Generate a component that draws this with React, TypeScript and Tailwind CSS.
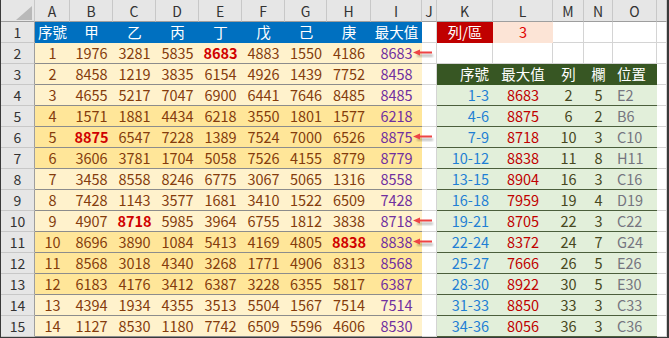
import React from "react";

const FONT = { fontFamily: '"Noto Sans CJK TC", "Noto Sans", sans-serif' };

// column widths in px: row header, A..P
const W = [34, 35, 43, 43, 43, 43, 43, 42, 44, 51, 15, 56, 60, 31, 29, 44, 10];
const LETTERS = ["", "A", "B", "C", "D", "E", "F", "G", "H", "I", "J", "K", "L", "M", "N", "O", ""];
const WCLS = [
  "w-[34px]", "w-[35px]", "w-[43px]", "w-[43px]", "w-[43px]", "w-[43px]", "w-[43px]", "w-[42px]",
  "w-[44px]", "w-[51px]", "w-[15px]", "w-[56px]", "w-[60px]", "w-[31px]", "w-[29px]", "w-[44px]", "w-[10px]",
];

const data: number[][] = [
  [1976, 3281, 5835, 8683, 4883, 1550, 4186, 8683],
  [8458, 1219, 3835, 6154, 4926, 1439, 7752, 8458],
  [4655, 5217, 7047, 6900, 6441, 7646, 8485, 8485],
  [1571, 1881, 4434, 6218, 3550, 1801, 1577, 6218],
  [8875, 6547, 7228, 1389, 7524, 7000, 6526, 8875],
  [3606, 3781, 1704, 5058, 7526, 4155, 8779, 8779],
  [3458, 8558, 8246, 6775, 3067, 5065, 1316, 8558],
  [7428, 1143, 3577, 1681, 3410, 1522, 6509, 7428],
  [4907, 8718, 5985, 3964, 6755, 1812, 3838, 8718],
  [8696, 3890, 1084, 5413, 4169, 4805, 8838, 8838],
  [8568, 3018, 4340, 3268, 1771, 4906, 8313, 8568],
  [6183, 4176, 3412, 6387, 3228, 6355, 5817, 6387],
  [4394, 1934, 4355, 3513, 5504, 1567, 7514, 7514],
  [1127, 8530, 1180, 7742, 6509, 5596, 4606, 8530],
];

// [row index, column index] of bold red maxima
const bold: Record<number, number> = { 0: 3, 4: 0, 8: 1, 9: 6 };
const arrows = new Set([0, 4, 8, 9]);

const summary: [string, number, number, number, string][] = [
  ["1-3", 8683, 2, 5, "E2"],
  ["4-6", 8875, 6, 2, "B6"],
  ["7-9", 8718, 10, 3, "C10"],
  ["10-12", 8838, 11, 8, "H11"],
  ["13-15", 8904, 16, 3, "C16"],
  ["16-18", 7959, 19, 4, "D19"],
  ["19-21", 8705, 22, 3, "C22"],
  ["22-24", 8372, 24, 7, "G24"],
  ["25-27", 7666, 26, 5, "E26"],
  ["28-30", 8922, 30, 5, "E30"],
  ["31-33", 8850, 33, 3, "C33"],
  ["34-36", 8056, 36, 3, "C36"],
];

function Arrow({ id }: { id: string }) {
  return (
    <svg
      className="absolute left-[41px] top-[5px] z-10"
      width="24"
      height="12"
      viewBox="0 0 24 12"
    >
      <defs>
        <filter id={id} x="-20%" y="-50%" width="140%" height="200%">
          <feGaussianBlur stdDeviation="0.8" />
        </filter>
      </defs>
      <rect x="5" y="6.5" width="16" height="2.2" fill="#000" opacity="0.3" filter={`url(#${id})`} />
      <path d="M1 4.5 L8 1.5 L8 7.5 Z" fill="#ee4444" />
      <rect x="7" y="3.5" width="13" height="2" fill="#ee4444" />
    </svg>
  );
}

function RowHead({ n }: { n: number }) {
  return (
    <div className="flex h-[21px] w-[34px] shrink-0 items-center justify-center border-r border-b border-r-[#9e9e9e] border-b-[#c8c8c8] bg-[#e6e6e6] text-[14px] text-[#333]">
      {n}
    </div>
  );
}

function Grid({ w, children, className = "" }: { w: string; children?: React.ReactNode; className?: string }) {
  return (
    <div className={`${w} flex h-[21px] shrink-0 items-center border-r border-b border-[#d4d4d4] bg-white ${className}`}>
      {children}
    </div>
  );
}

export default function App() {
  return (
    <div
      className="h-[338px] w-[669px] overflow-hidden border-l border-b border-r-2 border-[#3a3a3a] bg-white text-[14.5px] leading-none"
      style={FONT}
    >
      {/* column letters */}
      <div className="flex h-[22px]">
        {LETTERS.map((l, i) => (
          <div
            key={i}
            className={`${WCLS[i]} relative flex shrink-0 items-center justify-center border-r border-b border-r-[#c8c8c8] border-b-[#9e9e9e] bg-[#e6e6e6] pt-[1px] text-[14px] text-[#333]`}
          >
            {i === 0 ? (
              <svg className="absolute left-[15px] top-[6px]" width="16" height="14" viewBox="0 0 16 14">
                <path d="M16 0 L16 14 L0 14 Z" fill="#b9b9b9" />
              </svg>
            ) : (
              l
            )}
          </div>
        ))}
      </div>

      {/* row 1 */}
      <div className="flex">
        <RowHead n={1} />
        <div className="flex h-[21px] w-[387px] shrink-0 bg-[#0070c0] text-white">
          {["序號", "甲", "乙", "丙", "丁", "戊", "己", "庚", "最大值"].map((t, i) => (
            <div key={t} className={`${WCLS[i + 1]} flex shrink-0 items-center justify-center`}>
              {t}
            </div>
          ))}
        </div>
        <Grid w="w-[15px]" />
        <div className="flex h-[21px] w-[56px] shrink-0 items-center justify-center bg-[#c00000] text-white">
          列/區
        </div>
        <div className="flex h-[21px] w-[60px] shrink-0 items-center justify-center bg-[#fce4d6] text-[#e00000]">
          3
        </div>
        <Grid w="w-[31px]" />
        <Grid w="w-[29px]" />
        <Grid w="w-[44px]" />
        <Grid w="w-[10px]" />
      </div>

      {data.map((row, r) => {
        const dark = Math.floor(r / 3) % 2 === 1;
        const s = r >= 2 ? summary[r - 2] : null;
        return (
          <div key={r} className="flex">
            <RowHead n={r + 2} />
            <div
              className={`flex h-[21px] w-[387px] shrink-0 border-b border-[#8c8c8c] text-[#843c0c] ${
                dark ? "bg-[#ffe699]" : "bg-[#fff2cc]"
              }`}
            >
              <div className="flex w-[35px] shrink-0 items-center justify-center">{r + 1}</div>
              {row.map((v, c) => (
                <div
                  key={c}
                  className={`${WCLS[c + 2]} relative flex shrink-0 items-center justify-center ${
                    c === 7 ? "text-[#7030a0]" : ""
                  } ${bold[r] === c ? "font-bold text-[#d00000]" : ""}`}
                >
                  {v}
                  {c === 7 && arrows.has(r) && <Arrow id={`sh${r}`} />}
                </div>
              ))}
            </div>
            <Grid w="w-[15px]" />
            {r === 0 && (
              <>
                <Grid w="w-[56px]" />
                <Grid w="w-[60px]" />
                <Grid w="w-[31px]" />
                <Grid w="w-[29px]" />
                <Grid w="w-[44px]" />
              </>
            )}
            {r === 1 && (
              <div className="flex h-[21px] w-[220px] shrink-0 items-center bg-[#375623] text-white">
                <div className="w-[56px] shrink-0 pr-[4px] text-right">序號</div>
                <div className="w-[60px] shrink-0 text-center">最大值</div>
                <div className="w-[31px] shrink-0 text-center">列</div>
                <div className="w-[29px] shrink-0 text-center">欄</div>
                <div className="w-[44px] shrink-0 pl-[4px]">位置</div>
              </div>
            )}
            {s && (
              <div className="flex h-[21px] w-[220px] shrink-0 items-center border-b border-[#4b5e3c] bg-[#e2efda]">
                <div className="w-[56px] shrink-0 pr-[4px] text-right text-[#1f7fd4]">{s[0]}</div>
                <div className="w-[60px] shrink-0 text-center text-[#c00000]">{s[1]}</div>
                <div className="w-[31px] shrink-0 text-center text-[#474720]">{s[2]}</div>
                <div className="w-[29px] shrink-0 text-center text-[#474720]">{s[3]}</div>
                <div className="w-[44px] shrink-0 pl-[4px] text-[#75757f]">{s[4]}</div>
              </div>
            )}
            <Grid w="w-[10px]" />
          </div>
        );
      })}
    </div>
  );
}
